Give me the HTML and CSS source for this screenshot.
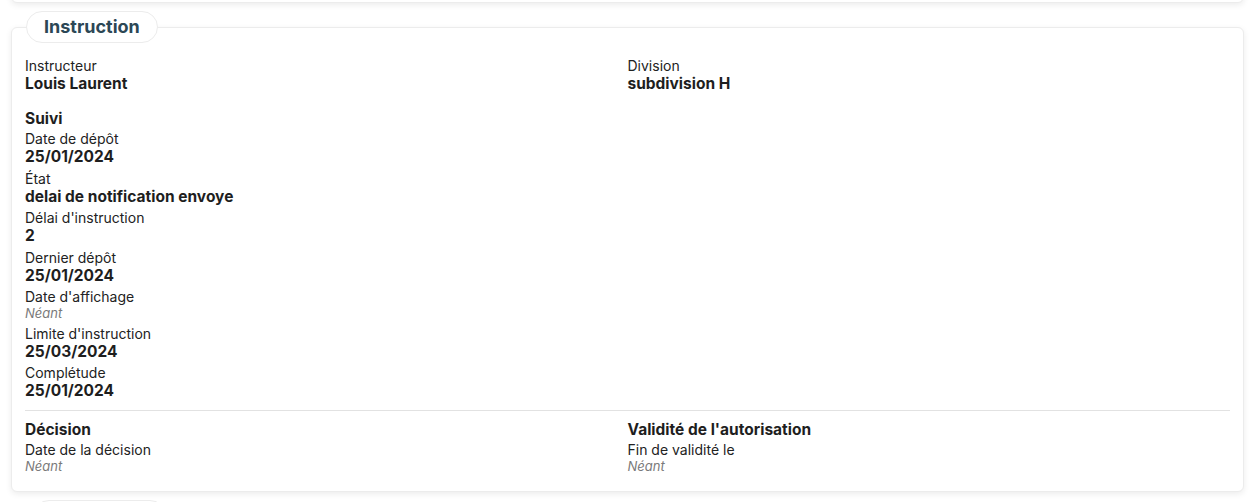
FILE: index.html
```html
<!DOCTYPE html>
<html lang="fr">
<head>
<meta charset="utf-8">
<title>Instruction</title>
<link rel="stylesheet" href="styles.css">
</head>
<body>
<div class="page">
  <div class="card card-prev"></div>

  <section class="card card-main">
    <div class="legend">Instruction</div>
    <div class="grid">
      <div class="field">
        <div class="label">Instructeur</div>
        <div class="value">Louis Laurent</div>
      </div>
      <div class="field">
        <div class="label">Division</div>
        <div class="value">subdivision H</div>
      </div>
    </div>

    <div class="group">
      <h3 class="heading">Suivi</h3>
      <div class="field">
        <div class="label">Date de dépôt</div>
        <div class="value">25/01/2024</div>
      </div>
      <div class="field">
        <div class="label">État</div>
        <div class="value">delai de notification envoye</div>
      </div>
      <div class="field">
        <div class="label">Délai d'instruction</div>
        <div class="value">2</div>
      </div>
      <div class="field">
        <div class="label">Dernier dépôt</div>
        <div class="value">25/01/2024</div>
      </div>
      <div class="field">
        <div class="label">Date d'affichage</div>
        <div class="empty">Néant</div>
      </div>
      <div class="field">
        <div class="label">Limite d'instruction</div>
        <div class="value">25/03/2024</div>
      </div>
      <div class="field">
        <div class="label">Complétude</div>
        <div class="value">25/01/2024</div>
      </div>
    </div>

    <hr class="divider">

    <div class="grid">
      <div class="group-col">
        <h3 class="heading">Décision</h3>
        <div class="field">
          <div class="label">Date de la décision</div>
          <div class="empty">Néant</div>
        </div>
      </div>
      <div class="group-col">
        <h3 class="heading">Validité de l'autorisation</h3>
        <div class="field">
          <div class="label">Fin de validité le</div>
          <div class="empty">Néant</div>
        </div>
      </div>
    </div>
  </section>

  <section class="card card-next">
    <div class="legend legend-next">&nbsp;</div>
  </section>
</div>
</body>
</html>
```

FILE: styles.css
```css
* { box-sizing: border-box; }

html, body {
  margin: 0;
  padding: 0;
  background: #ffffff;
  font-family: Inter, "Noto Sans", "Liberation Sans", sans-serif;
  color: #1e1e1e;
  overflow: hidden;
}

.page {
  padding: 0 10px 0 11px;
  display: flex;
  flex-direction: column;
}

.card {
  position: relative;
  background: #ffffff;
  border: 1px solid #ececec;
  border-radius: 6px;
  box-shadow: 0 2px 6px rgba(0, 0, 0, 0.08);
}

.card-prev {
  height: 40px;
  margin-top: -37px;
  border-top-left-radius: 0;
  border-top-right-radius: 0;
}

.card-main {
  margin-top: 24px;
  padding: 29px 13px 14px 13px;
}

.card-next {
  margin-top: 24px;
  height: 60px;
}

.legend {
  position: absolute;
  top: -17px;
  left: 14px;
  height: 32px;
  padding: 0 17px;
  border: 1px solid #ececec;
  border-radius: 16px;
  background: #ffffff;
  font-size: 18px;
  font-weight: 700;
  line-height: 30px;
  color: #2c4755;
}

.legend-next {
  left: 21px;
  width: 133px;
}

.grid {
  display: grid;
  grid-template-columns: 1fr 1fr;
}

.group {
  margin-top: 16px;
}

.heading {
  margin: 0 0 1px 0;
  font-size: 15.5px;
  font-weight: 700;
  line-height: 20px;
  color: #1e1e1e;
}

.field {
  margin-bottom: 3.5px;
}

.grid > .field { margin-bottom: 0; }

.label {
  font-size: 14px;
  line-height: 17px;
  color: #222222;
}

.value {
  padding-top: 1px;
  font-size: 15.5px;
  font-weight: 700;
  line-height: 18px;
  color: #1e1e1e;
}

.empty {
  padding-top: 1px;
  font-size: 13px;
  font-style: italic;
  line-height: 15px;
  color: #7a7a7a;
}

.divider {
  margin: 9.5px 0 9px 0;
  border: 0;
  border-top: 1px solid #e2e2e2;
  height: 0;
}
```
